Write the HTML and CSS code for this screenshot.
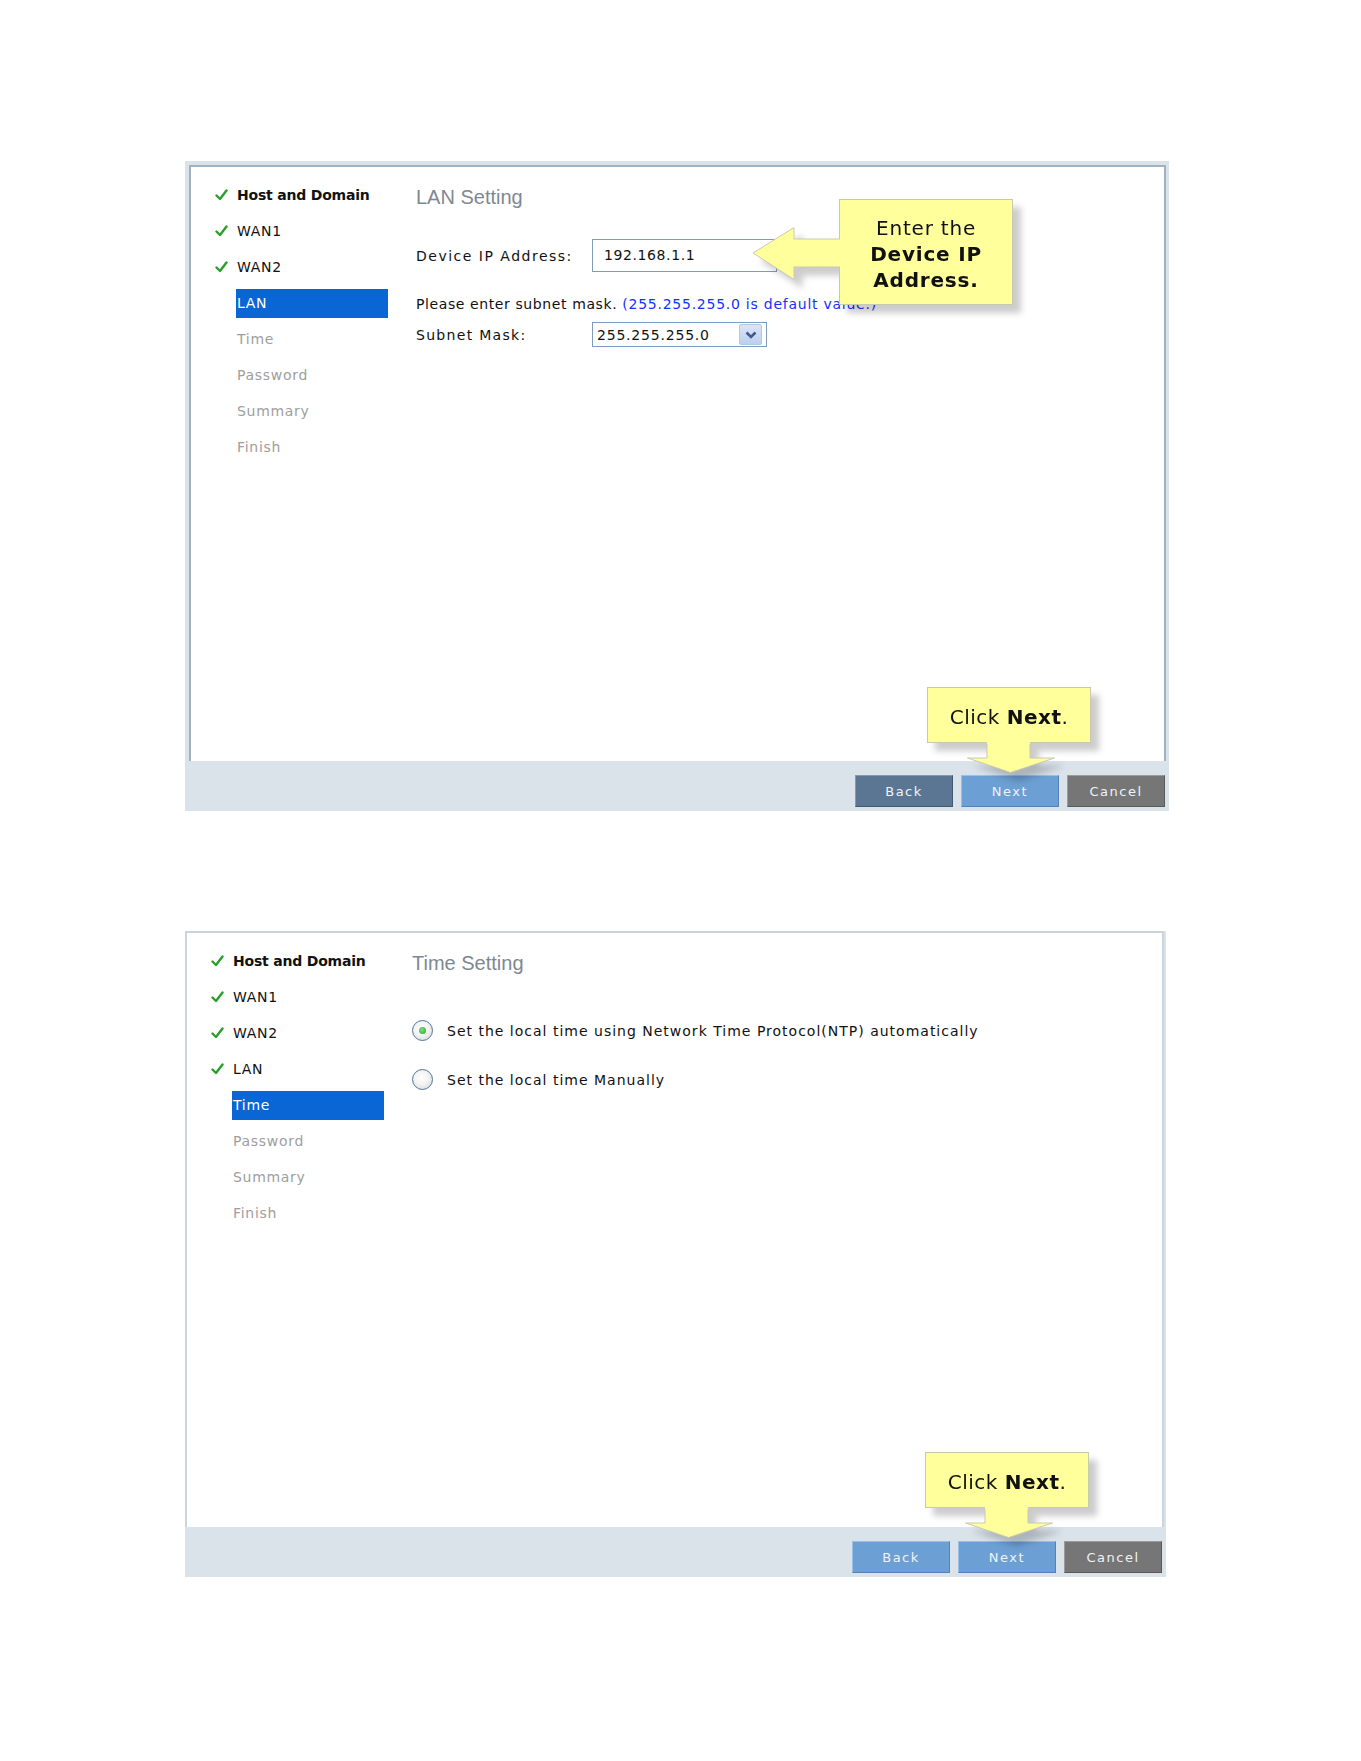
FILE: index.html
```html
<!DOCTYPE html>
<html lang="en">
<head>
<meta charset="utf-8">
<title>Setup Wizard</title>
<link rel="stylesheet" href="styles.css">
</head>
<body>
<main class="page">

  <!-- Step: LAN -->
  <section class="wizard wizard--framed">
    <div class="wizard-body">
      <nav class="steps">
        <div class="step done"><span class="tick"><svg viewBox="0 0 13 12" width="13" height="12"><path d="M1.5 6.5 L5 10 L11.5 1.5"/></svg></span><span class="step-label strong">Host and Domain</span></div>
        <div class="step done"><span class="tick"><svg viewBox="0 0 13 12" width="13" height="12"><path d="M1.5 6.5 L5 10 L11.5 1.5"/></svg></span><span class="step-label">WAN1</span></div>
        <div class="step done"><span class="tick"><svg viewBox="0 0 13 12" width="13" height="12"><path d="M1.5 6.5 L5 10 L11.5 1.5"/></svg></span><span class="step-label">WAN2</span></div>
        <div class="step current"><span class="tick"></span><span class="step-label">LAN</span></div>
        <div class="step todo"><span class="tick"></span><span class="step-label">Time</span></div>
        <div class="step todo"><span class="tick"></span><span class="step-label">Password</span></div>
        <div class="step todo"><span class="tick"></span><span class="step-label">Summary</span></div>
        <div class="step todo"><span class="tick"></span><span class="step-label">Finish</span></div>
      </nav>
      <div class="content">
        <h1 class="title">LAN Setting</h1>
        <div class="field field--ip">
          <label class="field-label">Device IP Address:</label>
          <div class="textbox">192.168.1.1</div>
        </div>
        <p class="hint">Please enter subnet mask. <span class="hint-default">(255.255.255.0 is default value.)</span></p>
        <div class="field field--mask">
          <label class="field-label">Subnet Mask:</label>
          <div class="selectbox">
            <span>255.255.255.0</span>
            <span class="select-btn"><svg viewBox="0 0 14 12" width="14" height="12"><path d="M2.5 3.5 L7 8 L11.5 3.5"/></svg></span>
          </div>
        </div>
      </div>
    </div>
    <footer class="wizard-bar">
      <button class="btn btn-dark">Back</button>
      <button class="btn btn-blue">Next</button>
      <button class="btn btn-grey">Cancel</button>
    </footer>

    <div class="callout callout-ip">
      <div class="callout-box callout-box--lines">Enter the<br><b>Device IP</b><br><b>Address.</b></div>
      <svg class="arrow-left" viewBox="0 0 90 54" width="90" height="54">
        <polygon class="arrow-fill" points="1,26 42,0.5 42,12 90,12 90,40 42,40 42,52.5"/>
        <polyline class="arrow-edge" points="88,12 42,12 42,0.5 1,26 42,52.5 42,40 88,40"/>
      </svg>
    </div>

    <div class="callout callout-next callout-next--lan">
      <div class="callout-box callout-box--short">Click <b>Next</b>.</div>
      <svg class="arrow-down" viewBox="0 0 88 32" width="88" height="32">
        <polygon class="arrow-fill" points="20,0 63,0 63,16 87.5,16 43.5,30.5 0.5,16 20,16"/>
        <polyline class="arrow-edge" points="20,2 20,16 0.5,16 43.5,30.5 87.5,16 63,16 63,2"/>
      </svg>
    </div>
  </section>

  <!-- Step: Time -->
  <section class="wizard wizard--plain">
    <div class="wizard-body">
      <nav class="steps">
        <div class="step done"><span class="tick"><svg viewBox="0 0 13 12" width="13" height="12"><path d="M1.5 6.5 L5 10 L11.5 1.5"/></svg></span><span class="step-label strong">Host and Domain</span></div>
        <div class="step done"><span class="tick"><svg viewBox="0 0 13 12" width="13" height="12"><path d="M1.5 6.5 L5 10 L11.5 1.5"/></svg></span><span class="step-label">WAN1</span></div>
        <div class="step done"><span class="tick"><svg viewBox="0 0 13 12" width="13" height="12"><path d="M1.5 6.5 L5 10 L11.5 1.5"/></svg></span><span class="step-label">WAN2</span></div>
        <div class="step done"><span class="tick"><svg viewBox="0 0 13 12" width="13" height="12"><path d="M1.5 6.5 L5 10 L11.5 1.5"/></svg></span><span class="step-label">LAN</span></div>
        <div class="step current"><span class="tick"></span><span class="step-label">Time</span></div>
        <div class="step todo"><span class="tick"></span><span class="step-label">Password</span></div>
        <div class="step todo"><span class="tick"></span><span class="step-label">Summary</span></div>
        <div class="step todo"><span class="tick"></span><span class="step-label">Finish</span></div>
      </nav>
      <div class="content">
        <h1 class="title">Time Setting</h1>
        <div class="options">
          <label class="option"><span class="radio checked"></span>Set the local time using Network Time Protocol(NTP) automatically</label>
          <label class="option"><span class="radio"></span>Set the local time Manually</label>
        </div>
      </div>
    </div>
    <footer class="wizard-bar">
      <button class="btn btn-blue">Back</button>
      <button class="btn btn-blue">Next</button>
      <button class="btn btn-grey">Cancel</button>
    </footer>

    <div class="callout callout-next callout-next--time">
      <div class="callout-box callout-box--short">Click <b>Next</b>.</div>
      <svg class="arrow-down" viewBox="0 0 88 32" width="88" height="32">
        <polygon class="arrow-fill" points="20,0 63,0 63,16 87.5,16 43.5,30.5 0.5,16 20,16"/>
        <polyline class="arrow-edge" points="20,2 20,16 0.5,16 43.5,30.5 87.5,16 63,16 63,2"/>
      </svg>
    </div>
  </section>

</main>
</body>
</html>
```

FILE: styles.css
```css
html, body {
  margin: 0;
  background: #ffffff;
}

body {
  font-family: "DejaVu Sans", Verdana, sans-serif;
  color: #111111;
}

.page {
  display: flex;
  flex-direction: column;
  align-items: flex-start;
  gap: 120px;
  padding: 161px 0 0 185px;
}

/* ---------- wizard frame ---------- */
.wizard {
  position: relative;
  background: #dae2ea;
}

.wizard--framed {
  width: 984px;
  padding-top: 4px;
}

.wizard--framed .wizard-body {
  margin: 0 3px 0 4px;
  border: 2px solid #9fb1be;
  border-bottom: 0;
}

.wizard--plain {
  width: 981px;
}

.wizard--plain .wizard-body {
  margin: 0 2px 0 0;
  border: 2px solid #cad4dd;
  border-bottom: 0;
}

.wizard-body {
  display: flex;
  height: 594px;
  background: #ffffff;
}

/* ---------- step list ---------- */
.steps {
  flex: none;
  width: 225px;
  padding-top: 10px;
}

.step {
  display: flex;
  align-items: center;
  height: 36px;
  font-size: 14px;
  letter-spacing: 0.7px;
}

.tick {
  flex: none;
  width: 21px;
  margin-left: 24px;
  height: 12px;
}

.tick svg {
  display: block;
}

.tick path {
  fill: none;
  stroke: #2b9f2b;
  stroke-width: 2.4;
  stroke-linecap: round;
  stroke-linejoin: round;
}

.step-label {
  box-sizing: border-box;
  width: 152px;
  height: 29px;
  line-height: 29px;
  padding-left: 1px;
  white-space: nowrap;
}

.step.done .step-label {
  color: #111111;
}

.step.todo .step-label {
  color: #9e9e9e;
}

.step.current .step-label {
  background: #0a66d4;
  color: #ffffff;
}

.strong {
  font-weight: bold;
  letter-spacing: -0.2px;
}

/* ---------- page content ---------- */
.content {
  flex: 1;
  padding-top: 18px;
}

.title {
  margin: 0;
  font-family: "Liberation Sans", Arial, sans-serif;
  font-size: 20px;
  line-height: 24px;
  font-weight: normal;
  color: #7e8892;
}

.field {
  display: flex;
  align-items: center;
  font-size: 14px;
}

.field--ip {
  margin-top: 30px;
}

.field--mask {
  margin-top: 9px;
}

.field-label {
  flex: none;
  width: 176px;
  letter-spacing: 1.5px;
  white-space: nowrap;
}

.field--mask .field-label {
  letter-spacing: 1.3px;
}

.textbox {
  box-sizing: border-box;
  width: 185px;
  height: 33px;
  border: 1px solid #7f9db9;
  padding-left: 11px;
  line-height: 31px;
  letter-spacing: 0.6px;
}

.hint {
  margin: 23px 0 0;
  font-size: 14px;
  line-height: 18px;
  letter-spacing: 0.6px;
  white-space: nowrap;
}

.hint-default {
  color: #1530ff;
  letter-spacing: 0.75px;
}

.selectbox {
  box-sizing: border-box;
  display: flex;
  align-items: center;
  justify-content: space-between;
  width: 175px;
  height: 25px;
  border: 1px solid #7f9db9;
  padding: 0 4px 0 4px;
  letter-spacing: 0.8px;
}

.select-btn {
  box-sizing: border-box;
  display: flex;
  align-items: center;
  justify-content: center;
  width: 23px;
  height: 21px;
  border: 1px solid #b4c7e7;
  border-radius: 2px;
  background: linear-gradient(#dae5f7, #bccff0);
}

.select-btn path {
  fill: none;
  stroke: #3d5b8f;
  stroke-width: 2.6;
}

/* ---------- radio options ---------- */
.options {
  display: flex;
  flex-direction: column;
  gap: 28px;
  margin-top: 45px;
  margin-left: 0;
}

.option {
  display: flex;
  align-items: center;
  gap: 14px;
  height: 21px;
  font-size: 14px;
  letter-spacing: 1px;
  white-space: nowrap;
}

.radio {
  box-sizing: border-box;
  display: flex;
  align-items: center;
  justify-content: center;
  flex: none;
  width: 21px;
  height: 21px;
  border-radius: 50%;
  border: 1px solid #52749c;
  background: radial-gradient(circle at 45% 40%, #ffffff 0, #f3f3f3 45%, #d2d2d2 100%);
}

.radio.checked::after {
  content: "";
  width: 7px;
  height: 7px;
  border-radius: 50%;
  background: radial-gradient(circle at 40% 40%, #7ae27a, #24a524);
}

/* ---------- button bar ---------- */
.wizard-bar {
  box-sizing: border-box;
  display: flex;
  justify-content: flex-end;
  align-items: flex-end;
  gap: 8px;
  height: 50px;
  padding: 0 4px 4px 0;
}

.btn {
  box-sizing: border-box;
  width: 98px;
  height: 32px;
  border: 1px solid;
  padding: 0;
  font-family: "DejaVu Sans", Verdana, sans-serif;
  font-size: 13px;
  letter-spacing: 1.5px;
  color: #eef3f8;
}

.btn-dark {
  background: #5b7693;
  border-color: #8599ae #425970 #425970 #8599ae;
}

.btn-blue {
  background: #6c9fd3;
  border-color: #9cbfe5 #5283b8 #5283b8 #9cbfe5;
}

.btn-grey {
  background: #767676;
  border-color: #9b9b9b #595959 #595959 #9b9b9b;
}

/* ---------- callouts ---------- */
.callout {
  position: absolute;
  filter: drop-shadow(8px 8px 3px rgba(0, 0, 0, 0.2));
}

.callout-box {
  box-sizing: border-box;
  position: relative;
  height: 100%;
  background: #ffff9c;
  border: 1px solid #c9c9b0;
  font-size: 20px;
  color: #111111;
  text-align: center;
  white-space: nowrap;
}

.callout-box--lines {
  padding-top: 15px;
  line-height: 26px;
  letter-spacing: 0.8px;
}

.callout-box--short {
  padding-top: 5px;
  line-height: 48px;
  letter-spacing: 0.5px;
}

.arrow-fill {
  fill: #ffff9c;
}

.arrow-edge {
  fill: none;
  stroke: #c9c9b0;
  stroke-width: 1;
}

.callout-ip {
  left: 654px;
  top: 38px;
  width: 174px;
  height: 106px;
}

.arrow-left {
  position: absolute;
  left: -87px;
  top: 28px;
}

.callout-next {
  width: 164px;
  height: 56px;
}

.callout-next--lan {
  left: 742px;
  top: 526px;
}

.callout-next--time {
  left: 740px;
  top: 521px;
}

.arrow-down {
  position: absolute;
  left: 40px;
  top: 55px;
}
```
